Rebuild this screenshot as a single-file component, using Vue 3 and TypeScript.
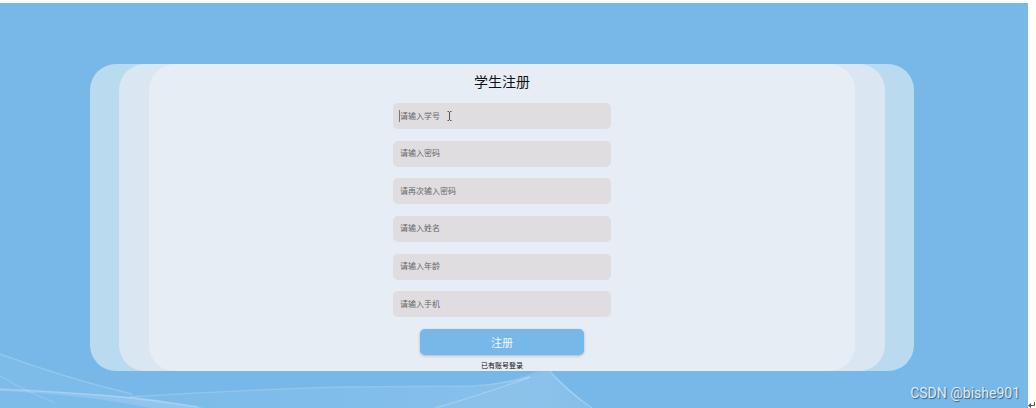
<script setup lang="ts">
import { reactive } from 'vue'

interface Field {
  key: string
  type: string
  hint: string
}

const fields: Field[] = [
  { key: 'studentNo', type: 'text', hint: '请输入学号' },
  { key: 'password', type: 'password', hint: '请输入密码' },
  { key: 'confirm', type: 'password', hint: '请再次输入密码' },
  { key: 'name', type: 'text', hint: '请输入姓名' },
  { key: 'age', type: 'text', hint: '请输入年龄' },
  { key: 'phone', type: 'tel', hint: '请输入手机' },
]

const form = reactive<Record<string, string>>({
  studentNo: '',
  password: '',
  confirm: '',
  name: '',
  age: '',
  phone: '',
})
</script>

<template>
  <div class="page">
    <main class="stage">
      <svg class="waves" viewBox="0 0 1028 80" preserveAspectRatio="none" aria-hidden="true">
        <defs>
          <linearGradient id="ridge" x1="0" y1="0" x2="1" y2="0">
            <stop offset="0" stop-color="#fff" stop-opacity="0.03" />
            <stop offset="0.9" stop-color="#fff" stop-opacity="0.12" />
            <stop offset="1" stop-color="#fff" stop-opacity="0.06" />
          </linearGradient>
        </defs>
        <path d="M0 26 Q70 52 132 66 Q170 76 200 80 L0 80Z" fill="#fff" fill-opacity="0.05" />
        <path d="M0 61 Q50 63 110 67 Q155 70 205 80 L150 80 Q80 66 0 63Z" fill="#fff" fill-opacity="0.14" />
        <path d="M120 69 Q260 61 340 59 L470 58 Q510 56 545 40 L590 80 L180 80Z" fill="url(#ridge)" />
        <path d="M435 80 Q488 64 530 49 L548 43 L590 80Z" fill="#fff" fill-opacity="0.04" />
        <g fill="none" stroke="#fff">
          <path d="M0 26 Q65 50 132 66" stroke-opacity="0.2" stroke-width="1.5" />
          <path d="M0 48 Q25 63 55 75" stroke-opacity="0.14" stroke-width="1.5" />
          <path d="M0 61 Q65 64 110 68 T198 79" stroke-opacity="0.22" stroke-width="1.5" />
          <path d="M130 69 Q260 61 340 59 L470 58 Q500 57 530 49" stroke-opacity="0.16" stroke-width="1.5" />
          <path d="M435 80 Q490 64 530 49" stroke-opacity="0.2" stroke-width="1.5" />
          <path d="M545 38 Q568 64 592 80" stroke-opacity="0.26" stroke-width="1.5" />
        </g>
      </svg>

      <section class="layer outer">
        <div class="layer middle">
          <div class="layer inner">
            <h1>学生注册</h1>
            <form @submit.prevent>
              <div v-for="(field, index) in fields" :key="field.key" class="field">
                <input
                  v-model="form[field.key]"
                  :type="field.type"
                  :placeholder="field.hint"
                  :aria-label="field.hint"
                  autocomplete="off"
                />
                <span v-if="index === 0" class="caret"></span>
                <svg v-if="index === 0" class="pointer" viewBox="0 0 5 10" aria-hidden="true">
                  <path d="M0.5 0.5H2M3 0.5H4.5M2.5 1V9M0.5 9.5H2M3 9.5H4.5" fill="none" stroke="#555" />
                </svg>
              </div>
              <button type="submit">注册</button>
            </form>
            <a href="#login">已有账号登录</a>
          </div>
        </div>
      </section>

      <p class="credit">CSDN @bishe901</p>
    </main>
    <svg class="return-mark" viewBox="0 0 8 6" aria-hidden="true">
      <path d="M6.5 0V3.5H2" fill="none" stroke="#555" />
      <path d="M0 3.5L3 1V6Z" fill="#555" />
    </svg>
  </div>
</template>

<style>
body {
  background: #fff;
}
</style>

<style scoped>
.page {
  position: relative;
  box-sizing: border-box;
  min-height: 100vh;
  padding: 3px 8px 0 0;
  display: flex;
  font-family: 'Liberation Sans', 'Noto Sans CJK SC', sans-serif;
}

.stage {
  position: relative;
  flex: 1;
  box-sizing: border-box;
  padding: 61px 114px 0 90px;
  background: #77b8e8;
  overflow: hidden;
}

.waves {
  position: absolute;
  left: 0;
  bottom: 0;
  width: 100%;
  height: 80px;
}

.layer {
  border-radius: 26px;
}

.outer {
  position: relative;
  padding: 0 29px;
  background: #b9daef;
}

.middle {
  padding: 0 30px;
  background: #dbe6f3;
}

.inner {
  box-sizing: border-box;
  min-height: 307px;
  padding-top: 8px;
  display: flex;
  flex-direction: column;
  align-items: center;
  background: #e7edf4;
}

h1 {
  margin: 0;
  font-size: 14px;
  font-weight: 400;
  line-height: 20px;
  color: #111;
}

form {
  width: 218px;
  height: 252px;
  margin-top: 11px;
  display: flex;
  flex-direction: column;
  align-items: center;
  justify-content: space-between;
}

.field {
  position: relative;
  width: 100%;
  height: 26px;
}

input {
  display: block;
  box-sizing: border-box;
  width: 100%;
  height: 26px;
  padding: 0 7px;
  border: 0;
  border-radius: 5px;
  outline: 0;
  background: #dfdde0;
  color: #333;
  font-family: inherit;
  font-size: 8px;
}

input::placeholder {
  color: #666;
  opacity: 1;
}

.caret {
  position: absolute;
  left: 6px;
  top: 7px;
  width: 1px;
  height: 12px;
  background: #777;
}

.pointer {
  position: absolute;
  left: 54px;
  top: 8px;
  width: 5px;
  height: 10px;
}

button {
  width: 164px;
  height: 26px;
  padding: 0;
  border: 0;
  border-radius: 5px;
  background: #77b8e8;
  box-shadow: 0 1px 3px rgba(60, 90, 120, 0.35);
  color: #f2f7fc;
  font-family: inherit;
  font-size: 11px;
}

a {
  margin-top: 6px;
  font-size: 7px;
  line-height: 10px;
  color: #111;
  text-decoration: none;
}

.credit {
  position: absolute;
  right: 8px;
  bottom: 6px;
  margin: 0;
  font-family: Roboto, 'Liberation Sans', sans-serif;
  font-size: 14px;
  line-height: 18px;
  color: #dcebf7;
  text-shadow: 1px 1px 1px rgba(40, 70, 100, 0.8);
}

.return-mark {
  position: absolute;
  right: 0;
  bottom: 0;
  width: 8px;
  height: 6px;
}
</style>
